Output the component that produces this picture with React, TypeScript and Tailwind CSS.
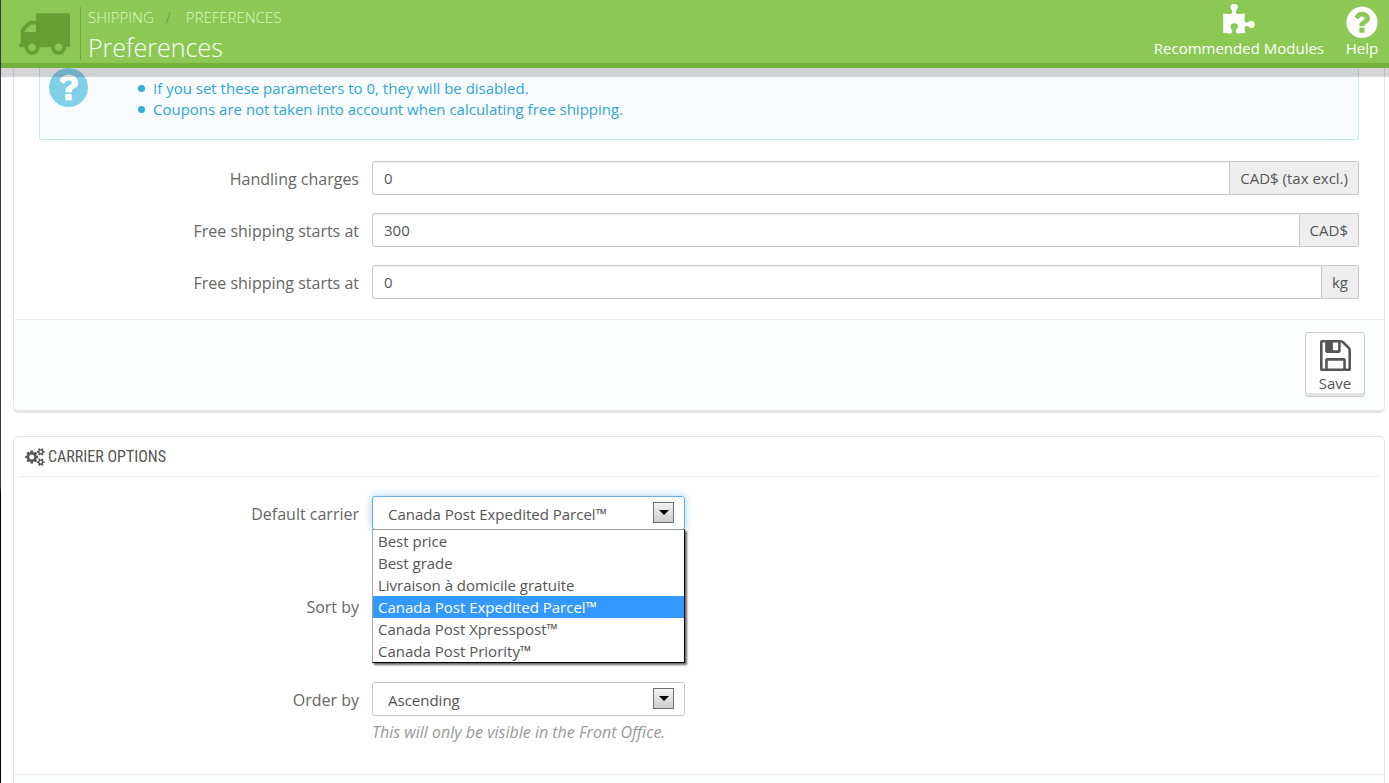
import type { ReactNode } from "react";

const QUESTION =
  "M1024 1376v-192q0-14-9-23t-23-9h-192q-14 0-23 9t-9 23v192q0 14 9 23t23 9h192q14 0 23-9t9-23zm256-672q0-88-55.5-163t-138.5-116-170-41q-243 0-371 213-15 24 8 42l132 100q7 6 19 6 16 0 25-12 53-68 86-92 34-24 86-24 48 0 85.5 26t37.5 59q0 38-20 61t-68 45q-63 28-115.5 86.5t-52.5 125.5v36q0 14 9 23t23 9h192q14 0 23-9t9-23q0-19 21.5-49.5t54.5-49.5q32-18 49-28.5t46-35 44.5-48 28-60.5 12.5-81zm384 192q0 209-103 385.5t-279.5 279.5-385.5 103-385.5-103-279.5-279.5-103-385.5 103-385.5 279.5-279.5 385.5-103 385.5 103 279.5 279.5 103 385.5z";
const TRUCK =
  "M640 1408q0-52-38-90t-90-38-90 38-38 90 38 90 90 38 90-38 38-90zm-384-512h384v-256h-158q-13 0-22 9l-195 195q-9 9-9 22v30zm1280 512q0-52-38-90t-90-38-90 38-38 90 38 90 90 38 90-38 38-90zm256-1088v1024q0 15-4 26.5t-13.5 18.5-16.5 11.5-23.5 6-22.5 2-25.5 0-22.5-.5q0 106-75 181t-181 75-181-75-75-181h-384q0 106-75 181t-181 75-181-75-75-181h-64q-3 0-22.5.5t-25.5 0-22.5-2-23.5-6-16.5-11.5-13.5-18.5-4-26.5q0-26 19-45t45-19v-320q0-8-.5-35t0-38 2.5-34.5 6.5-37 14-30.5 22.5-30l198-198q19-19 50.5-32t58.5-13h160v-192q0-26 19-45t45-19h1024q26 0 45 19t19 45z";
const PUZZLE =
  "M1755 1083q0 81-44.5 135t-123.5 54q-41 0-77.5-17.5t-59-38-56.5-38-71-17.5q-110 0-110 124 0 39 16 115t15 115v5q-22 0-33 1-34 3-97.5 11.5t-115.5 13.5-98 5q-61 0-103-26.5t-42-83.5q0-37 17.5-71t38-56.5 38-59 17.5-77.5q0-79-54-123.5t-135-44.5q-84 0-143 45.5t-59 127.5q0 43 15 83t33.5 64.5 33.5 53 15 50.5q0 45-46 89-37 35-117 35-95 0-245-24-9-2-27.5-4t-27.5-4l-13-2q-1 0-3-1-2 0-2-1v-1024q2 1 17.5 3.5t34 5 21.5 3.5q150 24 245 24 80 0 117-35 46-44 46-89 0-22-15-50.5t-33.5-53-33.5-64.5-15-83q0-82 59-127.5t144-45.5q80 0 134 44.5t54 123.5q0 41-17.5 77.5t-38 59-38 56.5-17.5 71q0 57 42 83.5t103 26.5q64 0 180-15t163-17v2q-1 2-3.5 17.5t-5 34-3.5 21.5q-24 150-24 245 0 80 35 117 44 46 89 46 22 0 50.5-15t53-33.5 64.5-33.5 83-15q82 0 127.5 59t45.5 143z";
const FLOPPY =
  "M384 1536h768v-384h-768v384zm896 0h128v-896q0-14-10-38.5t-20-34.5l-281-281q-10-10-34-20t-39-10v416q0 40-28 68t-68 28h-576q-40 0-68-28t-28-68v-416h-128v1280h128v-416q0-40 28-68t68-28h832q40 0 68 28t28 68v416zm-384-928v-320q0-13-9.5-22.5t-22.5-9.5h-192q-13 0-22.5 9.5t-9.5 22.5v320q0 13 9.5 22.5t22.5 9.5h192q13 0 22.5-9.5t9.5-22.5zm640 32v928q0 40-28 68t-68 28h-1344q-40 0-68-28t-28-68v-1344q0-40 28-68t68-28h928q40 0 88 20t76 48l280 280q28 28 48 76t20 88z";
const SMALL_COG =
  "v140q0 16-149 31-12 27-30 52 51 113 51 138 0 4-4 7-122 71-124 71-8 0-46-47t-52-68q-20 2-30 2t-30-2q-14 21-52 68t-46 47q-2 0-124-71-4-3-4-7 0-25 51-138-18-25-30-52-149-15-149-31v-140q0-16 149-31 13-29 30-52-51-113-51-138 0-4 4-7 4-2 35-20t59-34 30-16q8 0 46 46.5t52 67.5q20-2 30-2t30 2q51-71 92-112l6-2q4 0 124 70 4 3 4 7 0 25-51 138 17 23 30 52 149 15 149 31z";
const COGS =
  "M896 896q0-106-75-181t-181-75-181 75-75 181 75 181 181 75 181-75 75-181zm768 512q0-52-38-90t-90-38-90 38-38 90q0 53 37.5 90.5t90.5 37.5 90.5-37.5 37.5-90.5zm0-1024q0-52-38-90t-90-38-90 38-38 90q0 53 37.5 90.5t90.5 37.5 90.5-37.5 37.5-90.5zm-384 421v185q0 10-7 19.5t-16 10.5l-155 24q-11 35-32 76 34 48 90 115 7 11 7 20 0 12-7 19-23 30-82.5 89.5t-78.5 59.5q-11 0-21-7l-115-90q-37 19-77 31-11 108-23 155-7 24-30 24h-186q-11 0-20-7.5t-10-17.5l-23-153q-34-10-75-31l-118 89q-7 7-20 7-11 0-21-8-144-133-144-160 0-9 7-19 10-14 41-53t47-61q-23-44-35-82l-152-24q-10-1-17-9.5t-7-19.5v-185q0-10 7-19.5t16-10.5l155-24q11-35 32-76-34-48-90-115-7-11-7-20 0-12 7-20 22-30 82-89t79-59q11 0 21 7l115 90q34-18 77-32 11-108 23-154 7-24 30-24h186q11 0 20 7.5t10 17.5l23 153q34 10 75 31l118-89q8-7 20-7 11 0 21 8 144 133 144 160 0 8-7 19-12 16-42 54t-45 60q23 48 34 82l152 23q10 2 17 10.5t7 19.5z" +
  "M1920 1338" + SMALL_COG + "M1920 314" + SMALL_COG;

function Glyph({ d, box, className }: { d: string; box: string; className: string }) {
  return (
    <svg viewBox={box} className={className} fill="currentColor" aria-hidden="true">
      <path d={d} />
    </svg>
  );
}

function Row({ id, label, children }: { id: string; label: string; children: ReactNode }) {
  return (
    <div className="flex items-start gap-[13px]">
      <label htmlFor={id} className="w-80 shrink-0 pt-1.5 text-right text-base leading-6 text-[#666]">
        {label}
      </label>
      <div className="min-w-0 flex-1">{children}</div>
    </div>
  );
}

function AmountField({ id, label, value, unit }: { id: string; label: string; value: string; unit: string }) {
  return (
    <Row id={id} label={label}>
      <div className="flex h-[34px]">
        <input
          id={id}
          type="text"
          defaultValue={value}
          className="min-w-0 flex-1 rounded-l-[3px] border border-[#c7c7c7] bg-white px-[11px] text-[15px] text-[#555] shadow-[inset_0_1px_1px_rgba(0,0,0,0.07)] outline-none"
        />
        <span className="flex items-center rounded-r-[3px] border border-l-0 border-[#c7c7c7] bg-[#eee] px-2.5 text-[15px] text-[#555]">
          {unit}
        </span>
      </div>
    </Row>
  );
}

function SelectBox({ id, options, value, active }: { id: string; options: string[]; value?: string; active?: boolean }) {
  return (
    <div className="relative">
      <select
        id={id}
        defaultValue={value}
        className={
          active
            ? "block h-[34px] w-full appearance-none rounded-[3px] border border-[#66afe9] bg-white pt-0.5 pl-[15px] text-[15px] text-[#555] shadow-[0_0_8px_rgba(102,175,233,0.6)] outline-none"
            : "block h-[34px] w-full appearance-none rounded-[3px] border border-[#c7c7c7] bg-white pt-0.5 pl-[15px] text-[15px] text-[#555] outline-none"
        }
      >
        {options.map((o) => (
          <option key={o}>{o}</option>
        ))}
      </select>
      <span className="pointer-events-none absolute top-1.5 right-[11px] flex size-[21px] items-center justify-center border border-[#707070] bg-linear-to-b from-[#f3f3f3] to-[#cdcdcd]">
        <svg viewBox="0 0 10 5" className="h-[5px] w-2.5" aria-hidden="true">
          <path d="M0 0h10L5 5z" fill="#000" />
        </svg>
      </span>
    </div>
  );
}

const carriers = [
  "Best price",
  "Best grade",
  "Livraison à domicile gratuite",
  "Canada Post Expedited Parcel™",
  "Canada Post Xpresspost™",
  "Canada Post Priority™",
];
const selectedCarrier = "Canada Post Expedited Parcel™";

export default function App() {
  return (
    <div className="flex h-screen overflow-hidden bg-white font-['Open_Sans','Noto_Sans',sans-serif] text-[15px] text-[#555]">
      <div className="w-px shrink-0 bg-linear-to-b from-[#323c46] from-62% to-[#060607] to-63%" />
      <div className="min-w-0 flex-1">
        <header className="relative z-10 flex h-[68px] justify-between border-b-[5px] border-[#72b239] bg-[#8bc954] pr-2.5 pl-4 shadow-[0_9px_0_rgba(50,40,50,0.2)]">
          <div className="flex">
            <Glyph d={TRUCK} box="0 256 1792 1408" className="mt-[13px] h-[42px] w-[53px] text-[#669f31]" />
            <div className="mt-[7px] ml-2.5 h-[53px] border-l border-[#72a53f] pl-[7px]">
              <nav aria-label="Breadcrumb" className="flex text-[15px] leading-5 font-light text-[#e0f5cb]">
                <a href="#shipping">SHIPPING</a>
                <span className="w-8 pl-3 text-[#5f962d]">/</span>
                <a href="#preferences">PREFERENCES</a>
              </nav>
              <h1 className="mt-1 text-[25px] leading-8 font-light text-white">Preferences</h1>
            </div>
          </div>
          <div className="flex gap-[21px] text-[15px] leading-5 text-white">
            <a href="#modules" className="flex flex-col items-center pt-1">
              <Glyph d={PUZZLE} box="0 0 1792 1792" className="h-[34px] w-[35px]" />
              Recommended Modules
            </a>
            <a href="#help" className="flex flex-col items-center pt-1">
              <Glyph d={QUESTION} box="64 0 1664 1664" className="size-[34px]" />
              Help
            </a>
          </div>
        </header>

        <main className="pr-1 pl-3">
          <section className="overflow-hidden rounded-b-[5px] border border-t-0 border-[#e4e4e4] shadow-[0_2px_0_#e6e6e6]">
            <div className="px-[25px] pb-5">
              <div className="flex h-[72px] rounded-b-[3px] border border-t-0 border-[#c5e7f1] bg-[#f8fcff] text-[#31a6d2]">
                <Glyph d={QUESTION} box="128 128 1536 1536" className="ml-[9px] size-[39px] text-[#7fd0e8]" />
                <ul className="mt-2.5 ml-[50px] text-[15px] leading-[21px]">
                  {[
                    "If you set these parameters to 0, they will be disabled.",
                    "Coupons are not taken into account when calculating free shipping.",
                  ].map((t) => (
                    <li key={t} className="flex items-center gap-2">
                      <span className="size-[7px] rounded-full bg-[#31b0d5]" />
                      {t}
                    </li>
                  ))}
                </ul>
              </div>
              <div className="mt-[21px] flex flex-col gap-[18px]">
                <AmountField id="handling" label="Handling charges" value="0" unit="CAD$ (tax excl.)" />
                <AmountField id="free-price" label="Free shipping starts at" value="300" unit="CAD$" />
                <AmountField id="free-weight" label="Free shipping starts at" value="0" unit="kg" />
              </div>
            </div>
            <div className="flex justify-end border-t border-[#eee] bg-[#fcfdfe] pt-3 pr-[19px] pb-[13px]">
              <button
                type="button"
                className="flex h-[65px] w-[60px] flex-col items-center rounded-[3px] border border-[#ccc] bg-white pt-[7px] text-[15px] leading-5 text-[#555] shadow-[inset_0_-3px_0_#e4e4e4]"
              >
                <Glyph d={FLOPPY} box="0 128 1536 1536" className="mb-0.5 size-[31px]" />
                Save
              </button>
            </div>
          </section>

          <section className="mt-[25px] rounded-[5px] border border-[#e4e4e4]">
            <h2 className="mx-[5px] flex h-10 items-center gap-[3px] border-b border-[#eee] pl-1.5 font-['Ubuntu_Condensed','Roboto_Condensed',sans-serif] text-base text-[#555]">
              <Glyph d={COGS} box="0 0 1920 1792" className="h-[18px] w-5" />
              CARRIER OPTIONS
            </h2>
            <div className="flex flex-col gap-[59px] px-[25px] pt-[19px] pb-8">
              <Row id="carrier" label="Default carrier">
                <div className="relative w-[313px]">
                  <SelectBox id="carrier" options={carriers} value={selectedCarrier} active />
                  <ul
                    role="listbox"
                    aria-label="Default carrier"
                    className="absolute top-[33px] left-0 z-10 w-full border border-t-[#999] border-r-black border-b-black border-l-[#aaa] bg-white shadow-[2px_2px_2px_rgba(0,0,0,0.6)]"
                  >
                    {carriers.map((c) => (
                      <li
                        key={c}
                        role="option"
                        aria-selected={c === selectedCarrier}
                        className="h-[22px] pl-[5px] text-[15px] leading-[22px] aria-selected:bg-[#3399ff] aria-selected:text-white"
                      >
                        {c}
                      </li>
                    ))}
                  </ul>
                </div>
              </Row>
              <Row id="sort" label="Sort by">
                <div className="w-[313px]">
                  <SelectBox id="sort" options={[]} />
                </div>
              </Row>
              <Row id="order" label="Order by">
                <div className="w-[313px]">
                  <SelectBox id="order" options={["Ascending"]} />
                </div>
                <p className="mt-1.5 text-base leading-5 text-[#999] italic">This will only be visible in the Front Office.</p>
              </Row>
            </div>
            <div className="h-10 border-t border-[#eee] bg-[#fcfdfe]" />
          </section>
        </main>
      </div>
    </div>
  );
}
